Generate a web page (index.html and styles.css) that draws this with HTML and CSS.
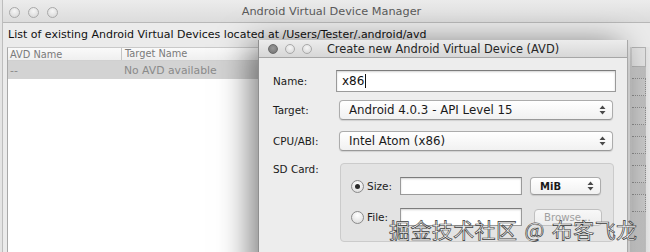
FILE: index.html
```html
<!DOCTYPE html>
<html>
<head>
<meta charset="utf-8">
<link rel="stylesheet" href="styles.css">
</head>
<body>
<div class="desktop">
  <div class="main-window">
    <div class="titlebar">
      <div class="lights">
        <span class="light"></span><span class="light"></span><span class="light"></span>
      </div>
      <div class="title">Android Virtual Device Manager</div>
    </div>
    <div class="main-body">
      <div class="path">List of existing Android Virtual Devices located at /Users/Tester/.android/avd</div>
      <div class="main-content">
        <div class="avd-table">
          <div class="thead">
            <div class="col-name">AVD Name</div>
            <div class="col-target">Target Name</div>
          </div>
          <div class="trow selected">
            <div class="col-name">--</div>
            <div class="col-target">No AVD available</div>
          </div>
        </div>
        <div class="side-buttons">
          <div class="side-btn top"></div>
          <div class="side-btn"></div>
          <div class="side-btn"></div>
          <div class="side-btn"></div>
          <div class="side-btn"></div>
          <div class="side-btn"></div>
        </div>
      </div>
    </div>
  </div>

  <div class="dialog">
    <div class="titlebar dlg-titlebar">
      <div class="lights dlg-lights">
        <span class="light close"></span><span class="light"></span><span class="light"></span>
      </div>
      <div class="title dlg-title">Create new Android Virtual Device (AVD)</div>
    </div>
    <div class="dlg-body">
      <div class="form-row">
        <label class="lbl">Name:</label>
        <div class="textfield name-field">x86<span class="caret"></span></div>
      </div>
      <div class="form-row row-target">
        <label class="lbl">Target:</label>
        <div class="popup wide">Android 4.0.3 - API Level 15
          <svg class="arrows" width="7" height="10" viewBox="0 0 7 10"><path d="M3.5 0.5 L6.5 4 H0.5 Z M0.5 6 H6.5 L3.5 9.5 Z" fill="#4a4a4a"/></svg>
        </div>
      </div>
      <div class="form-row row-cpu">
        <label class="lbl">CPU/ABI:</label>
        <div class="popup wide">Intel Atom (x86)
          <svg class="arrows" width="7" height="10" viewBox="0 0 7 10"><path d="M3.5 0.5 L6.5 4 H0.5 Z M0.5 6 H6.5 L3.5 9.5 Z" fill="#4a4a4a"/></svg>
        </div>
      </div>
      <div class="form-row row-sd">
        <label class="lbl sd-label">SD Card:</label>
        <div class="groupbox">
          <div class="radio-row">
            <span class="radio checked"></span>
            <span class="radio-label">Size:</span>
            <div class="textfield small"></div>
            <div class="popup mib">MiB
              <svg class="arrows" width="7" height="10" viewBox="0 0 7 10"><path d="M3.5 0.5 L6.5 4 H0.5 Z M0.5 6 H6.5 L3.5 9.5 Z" fill="#4a4a4a"/></svg>
            </div>
          </div>
          <div class="radio-row file-row">
            <span class="radio"></span>
            <span class="radio-label">File:</span>
            <div class="textfield small"></div>
            <div class="button disabled">Browse...</div>
          </div>
        </div>
      </div>
    </div>
  </div>

  <div class="watermark">掘金技术社区 @ 布客飞龙</div>
</div>
</body>
</html>
```

FILE: styles.css
```css
* { box-sizing: border-box; }

body {
  margin: 0;
  width: 650px;
  height: 252px;
  overflow: hidden;
  background: #e4e4e4;
  font-family: "DejaVu Sans", "Noto Sans", sans-serif;
  font-size: 11px;
  color: #1c1c1c;
}

.desktop {
  position: relative;
  width: 650px;
  height: 252px;
  overflow: hidden;
}

/* ---------- main window ---------- */
.main-window {
  margin-left: 2px;
  width: 660px;
  height: 252px;
  background: #ebebeb;
  border-left: 1px solid #bdbdbd;
}

.titlebar {
  position: relative;
  height: 23px;
  display: flex;
  align-items: center;
  justify-content: center;
  background: linear-gradient(#ececec, #dcdcdc);
  border-bottom: 1px solid #b8b8b8;
}

.lights {
  position: absolute;
  left: 6px;
  top: 7px;
  display: flex;
  gap: 8px;
}

.light {
  width: 11px;
  height: 11px;
  border-radius: 50%;
  border: 1px solid #a9a9a9;
  background: radial-gradient(circle at 50% 35%, #f6f6f6, #d4d4d4);
}

.title {
  color: #5a5a5a;
  font-size: 11.3px;
  margin-left: -2px;
}

.main-body {
  padding-left: 4px;
}

.path {
  margin-top: 5px;
  padding-left: 1px;
  line-height: 14px;
  font-size: 11px;
  color: #111;
}

.main-content {
  margin-top: 5px;
  display: flex;
  gap: 2px;
}

.avd-table {
  width: 621px;
  height: 210px;
  background: #fff;
  border-left: 1px solid #a8a8a8;
  border-top: 1px solid #c9c9c9;
}

.thead, .trow {
  display: flex;
  align-items: center;
}

.thead {
  height: 13px;
  color: #7a7a7a;
  font-size: 9.8px;
  background: linear-gradient(#fafafa, #efefef);
  border-bottom: 1px solid #d0d0d0;
}

.trow {
  height: 18px;
  color: #8a8a8a;
  font-size: 10.8px;
}

.trow.selected {
  background: #d3d3d3;
}

.col-name {
  width: 113px;
  padding-left: 2px;
}

.col-target {
  padding-left: 3px;
}

.thead .col-target {
  border-left: 1px solid #c4c4c4;
  height: 12px;
  line-height: 12px;
}

.side-buttons {
  width: 22px;
  display: flex;
  flex-direction: column;
  gap: 11px;
  background: linear-gradient(90deg, #cfcfcf, #bdbdbd 70%, #e4e4e4 75%, #ebebeb);
  height: 210px;
}

.side-btn {
  height: 18px;
  margin-right: 6px;
  margin-left: 2px;
  border: 1px dotted #8c8c8c;
  border-left: none;
  background: #c8c8c8;
}

.side-btn.top {
  height: 20px;
  background: #e3e3e3;
  border: 1px solid #b3b3b3;
  border-left: none;
}

/* ---------- dialog ---------- */
.dialog {
  position: absolute;
  left: 258px;
  top: 40px;
  width: 370px;
  height: 240px;
  background: #ededed;
  border-left: 1px solid #8f8f8f;
  border-right: 1px solid #a8a8a8;
  box-shadow: -8px 4px 30px rgba(0, 0, 0, 0.5);
}

.dlg-titlebar {
  height: 18px;
  background: linear-gradient(#ececec, #d7d7d7);
  border-bottom: 1px solid #a6a6a6;
}

.dlg-lights {
  left: 9px;
  top: 4px;
  gap: 7px;
}

.dlg-lights .light {
  width: 10px;
  height: 10px;
}

.dlg-lights .light.close {
  border-color: #6a6a6a;
  background: radial-gradient(circle at 50% 40%, #9a9a9a, #6f6f6f);
}

.dlg-title {
  color: #262626;
  font-size: 11.4px;
  margin-left: 0;
}

.dlg-body {
  padding: 12px 11px 0 14px;
}

.form-row {
  display: flex;
  align-items: center;
}

.lbl {
  width: 63px;
  flex: none;
  font-size: 10.4px;
  color: #1a1a1a;
}

.row-target { margin-top: 8px; }
.row-cpu { margin-top: 11px; }
.row-sd { margin-top: 12px; align-items: flex-start; }
.sd-label { line-height: 12px; }

.textfield {
  background: #fff;
  border: 1px solid #9a9a9a;
  border-top-color: #7c7c7c;
  box-shadow: inset 0 1px 2px rgba(0, 0, 0, 0.18);
}

.name-field {
  flex: 1;
  height: 22px;
  display: flex;
  align-items: center;
  padding-left: 5px;
  font-size: 12px;
  color: #111;
}

.caret {
  width: 1px;
  height: 14px;
  background: #111;
  margin-left: 1px;
}

.popup {
  position: relative;
  height: 20px;
  display: flex;
  align-items: center;
  padding-left: 9px;
  font-size: 11.8px;
  color: #1a1a1a;
  background: linear-gradient(#ffffff, #f1f1f1);
  border: 1px solid #acacac;
  border-bottom-color: #999;
  border-radius: 4px;
  box-shadow: 0 1px 1px rgba(0, 0, 0, 0.12);
}

.popup.wide {
  flex: 1;
  margin-left: 3px;
  margin-right: 3px;
}

.arrows {
  position: absolute;
  right: 6px;
  top: 4px;
}

.groupbox {
  flex: 1;
  margin-left: 4px;
  margin-right: 2px;
  height: 79px;
  padding: 12px 0 0 10px;
  background: #e3e3e3;
  border: 1px solid #cbcbcb;
  border-radius: 4px;
}

.radio-row {
  display: flex;
  align-items: center;
  height: 20px;
}

.file-row {
  margin-top: 11px;
}

.radio {
  width: 13px;
  height: 13px;
  flex: none;
  border-radius: 50%;
  border: 1px solid #8a8a8a;
  background: radial-gradient(circle at 50% 30%, #ffffff, #d8d8d8);
  display: flex;
  align-items: center;
  justify-content: center;
}

.radio.checked::after {
  content: "";
  width: 5px;
  height: 5px;
  border-radius: 50%;
  background: #2a2a2a;
}

.radio-label {
  width: 36px;
  padding-left: 3px;
  font-size: 10.5px;
}

.textfield.small {
  width: 122px;
  height: 18px;
}

.popup.mib {
  width: 71px;
  height: 18px;
  margin-left: 8px;
  font-size: 10px;
  font-weight: bold;
  padding-left: 9px;
}

.popup.mib .arrows {
  top: 3px;
}

.button {
  width: 68px;
  height: 17px;
  margin-left: 12px;
  display: flex;
  align-items: center;
  padding-left: 9px;
  font-size: 10.2px;
  border: 1px solid #c0c0c0;
  border-radius: 4px;
  background: linear-gradient(#f8f8f8, #ededed);
}

.button.disabled {
  color: #a0a0a0;
}

/* ---------- watermark ---------- */
.watermark {
  position: absolute;
  left: 389px;
  top: 219px;
  font-family: "Noto Sans CJK SC", sans-serif;
  font-size: 21px;
  line-height: 21px;
  letter-spacing: 0.4px;
  word-spacing: 2px;
  color: #fafafa;
  white-space: nowrap;
  -webkit-text-stroke: 0.7px #3a3a3a;
}
```
